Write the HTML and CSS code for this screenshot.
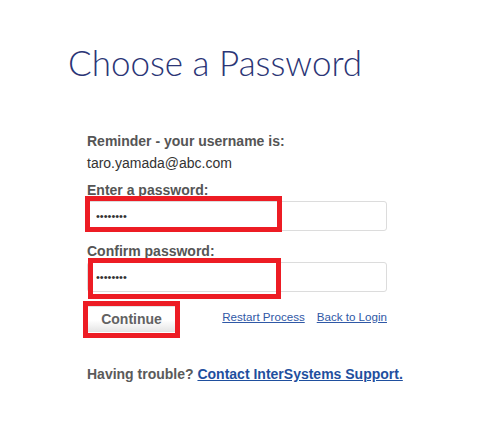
FILE: index.html
```html
<!DOCTYPE html>
<html lang="en">
<head>
    <meta charset="UTF-8">
    <meta name="viewport" content="width=device-width, initial-scale=1.0">
    <title>Choose a Password</title>
    <link rel="stylesheet" href="styles.css">
</head>
<body>
    <div class="page">
        <h1 class="title">Choose a Password</h1>
        <form class="form" onsubmit="return false">
            <p class="label">Reminder - your username is:</p>
            <p class="username">taro.yamada@abc.com</p>

            <label class="label" for="pw1">Enter a password:</label>
            <div class="field">
                <input type="password" id="pw1" value="password">
                <span class="mark mark-pw1"></span>
            </div>

            <label class="label label-confirm" for="pw2">Confirm password:</label>
            <div class="field">
                <input type="password" id="pw2" value="password">
                <span class="mark mark-pw2"></span>
            </div>

            <div class="actions">
                <div class="btn-wrap">
                    <button type="submit" class="btn">Continue</button>
                    <span class="mark mark-btn"></span>
                </div>
                <div class="links">
                    <a href="#">Restart Process</a>
                    <a href="#">Back to Login</a>
                </div>
            </div>

            <p class="trouble">Having trouble? <a href="#">Contact InterSystems Support.</a></p>
        </form>
    </div>
</body>
</html>
```

FILE: styles.css
```css
body {
    margin: 0;
    padding: 0;
    background-color: #fff;
    font-family: "Liberation Sans", Arial, sans-serif;
    color: #555;
}

.page {
    padding: 41px 0 0 68px;
}

.title {
    margin: 0;
    font-family: Lato, "Open Sans", sans-serif;
    font-weight: 300;
    font-size: 35px;
    line-height: 43px;
    color: #2b3576;
}

.form {
    margin: 49px 0 0 19px;
    width: 300px;
}

.label {
    display: block;
    margin: 0 0 3px;
    font-size: 14px;
    font-weight: bold;
    line-height: 16px;
    color: #555;
}

.username {
    margin: 6px 0 11px;
    font-size: 14px;
    line-height: 16px;
    color: #333;
}

.label-confirm {
    margin-top: 12px;
}

.field {
    position: relative;
}

.field input {
    display: block;
    box-sizing: border-box;
    width: 300px;
    height: 30px;
    margin: 0;
    padding: 0 8px;
    border: 1px solid #dcdcdc;
    border-radius: 3px;
    font-family: "Liberation Sans", Arial, sans-serif;
    font-size: 11px;
    color: #333;
    outline: none;
}

/* red annotation boxes laid over the fields */
.mark {
    position: absolute;
    box-sizing: border-box;
    border: 5px solid #ed1c24;
    pointer-events: none;
}

.mark-pw1 {
    left: -2px;
    top: -5px;
    width: 197px;
    height: 36px;
}

.mark-pw2 {
    left: 1px;
    top: -4px;
    width: 193px;
    height: 41px;
}

.mark-btn {
    left: -4px;
    top: -5px;
    width: 97px;
    height: 37px;
}

.actions {
    display: flex;
    justify-content: space-between;
    align-items: flex-start;
    margin-top: 14px;
}

.btn-wrap {
    position: relative;
}

.btn {
    display: block;
    box-sizing: border-box;
    width: 89px;
    height: 26px;
    padding: 0;
    border: 1px solid #e4e4e4;
    background: linear-gradient(#ffffff, #ffffff 55%, #e6e6e6);
    font-family: "Liberation Sans", Arial, sans-serif;
    font-size: 14px;
    font-weight: bold;
    line-height: 24px;
    color: #626262;
    cursor: pointer;
}

.links {
    display: flex;
    gap: 12px;
    padding-top: 4px;
}

.links a {
    font-size: 11.6px;
    line-height: 14px;
    color: #2f58a6;
}

.trouble {
    margin: 34px 0 0;
    font-size: 14px;
    font-weight: bold;
    line-height: 16px;
    white-space: nowrap;
    color: #5a5a5a;
}

.trouble a {
    color: #1f4f9e;
}
```
